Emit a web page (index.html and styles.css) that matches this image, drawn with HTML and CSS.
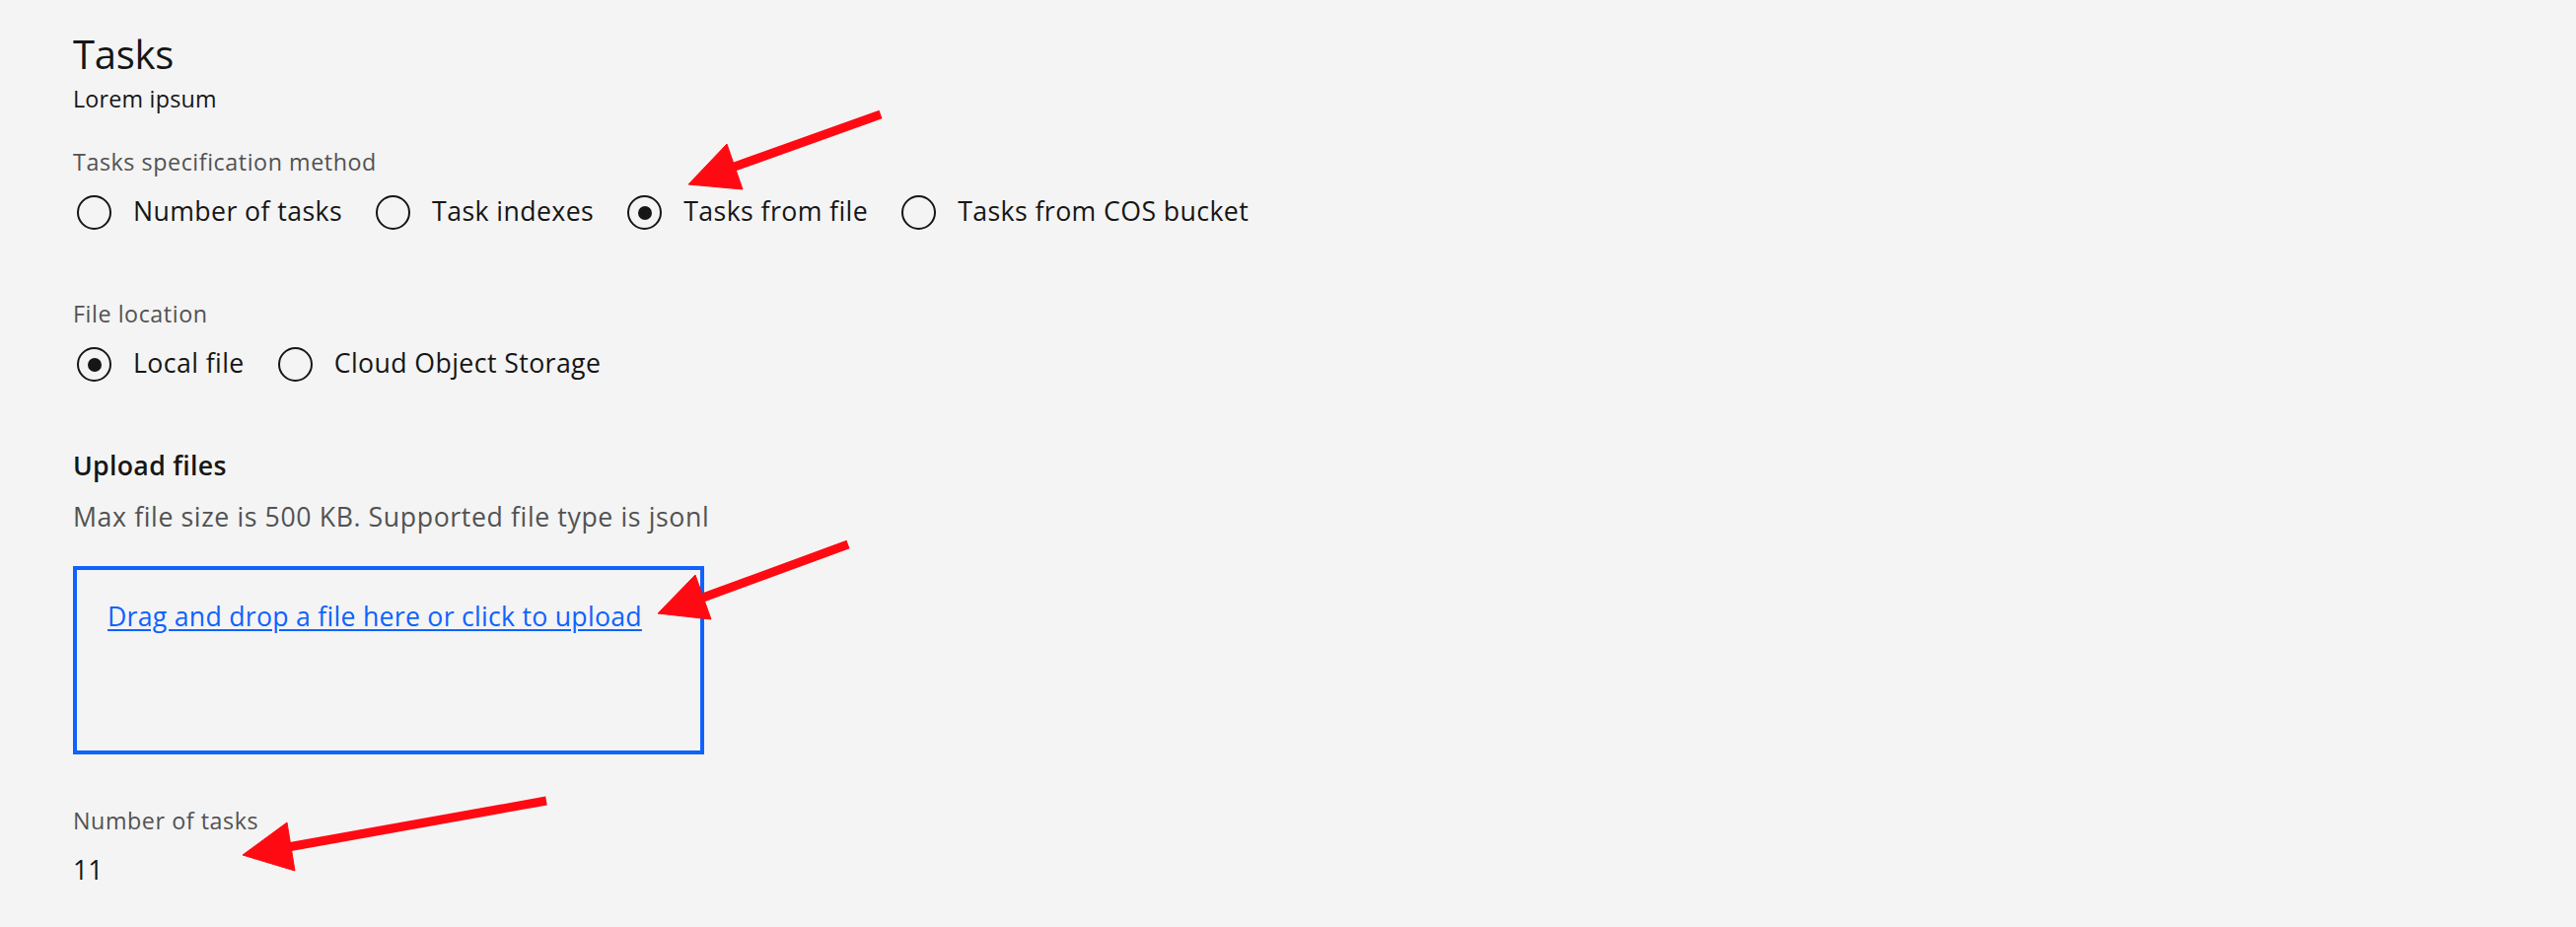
FILE: index.html
```html
<!DOCTYPE html>
<html lang="en">
<head>
<meta charset="utf-8">
<title>Tasks</title>
<link rel="stylesheet" href="styles.css">
</head>
<body>
<main class="page">
  <h1 class="title">Tasks</h1>
  <p class="subtitle">Lorem ipsum</p>

  <div class="field field--method">
    <div class="label">Tasks specification method</div>
    <div class="radio-group" role="radiogroup">
      <div class="radio"><span class="radio__circle"></span><span class="radio__text">Number of tasks</span></div>
      <div class="radio"><span class="radio__circle"></span><span class="radio__text">Task indexes</span></div>
      <div class="radio"><span class="radio__circle radio__circle--checked"></span><span class="radio__text">Tasks from file</span></div>
      <div class="radio"><span class="radio__circle"></span><span class="radio__text">Tasks from COS bucket</span></div>
    </div>
  </div>

  <div class="field field--location">
    <div class="label">File location</div>
    <div class="radio-group" role="radiogroup">
      <div class="radio"><span class="radio__circle radio__circle--checked"></span><span class="radio__text">Local file</span></div>
      <div class="radio"><span class="radio__circle"></span><span class="radio__text">Cloud Object Storage</span></div>
    </div>
  </div>

  <div class="upload">
    <h2 class="upload__title">Upload files</h2>
    <p class="upload__helper">Max file size is 500 KB. Supported file type is jsonl</p>
    <div class="dropzone">
      <a class="dropzone__link" href="#">Drag and drop a file here or click to upload</a>
    </div>
  </div>

  <div class="field field--count">
    <div class="label">Number of tasks</div>
    <div class="value">11</div>
  </div>
</main>

<svg class="annotations" width="2612" height="940" viewBox="0 0 2612 940" aria-hidden="true">
  <g fill="#ff0a12" stroke="#ff0a12">
    <line x1="893" y1="116" x2="742" y2="170" stroke-width="9"/>
    <polygon points="737,146 698,187 753,192" stroke-width="1"/>
    <line x1="860" y1="552" x2="710" y2="607" stroke-width="9"/>
    <polygon points="705,583 667,622 721,628" stroke-width="1"/>
    <line x1="554" y1="812" x2="292" y2="859" stroke-width="9"/>
    <polygon points="291,834 246,867 299,883" stroke-width="1"/>
  </g>
</svg>
</body>
</html>
```

FILE: styles.css
```css
* {
  box-sizing: border-box;
}

html, body {
  margin: 0;
  padding: 0;
  background: #f4f4f4;
}

body {
  font-family: "Open Sans", "Noto Sans", "Liberation Sans", sans-serif;
  color: #161616;
  position: relative;
  width: 2612px;
  height: 940px;
  overflow: hidden;
}

.page {
  padding: 31px 0 0 74px;
}

.title {
  margin: 0;
  font-size: 40px;
  line-height: 48px;
  font-weight: 400;
  letter-spacing: -0.3px;
}

.subtitle {
  margin: 5px 0 0;
  font-size: 23.3px;
  line-height: 32px;
  letter-spacing: 0.2px;
}

.label {
  font-size: 23.3px;
  line-height: 32px;
  color: #525252;
  letter-spacing: 0.55px;
}

.field--method {
  margin-top: 32px;
}

.field--location {
  margin-top: 69px;
}

.field--count {
  margin-top: 51px;
}

.radio-group {
  display: flex;
  gap: 30px;
  margin-top: 18px;
  height: 35px;
  align-items: center;
}

.radio {
  display: flex;
  align-items: center;
  gap: 22px;
}

.radio__circle {
  width: 35px;
  height: 35px;
  margin-left: 4px;
  border: 2px solid #161616;
  border-radius: 50%;
  display: flex;
  align-items: center;
  justify-content: center;
}

.radio__circle--checked::after {
  content: "";
  width: 14px;
  height: 14px;
  border-radius: 50%;
  background: #161616;
}

.radio__text {
  font-size: 26.7px;
  line-height: 34px;
  padding-bottom: 4px;
  letter-spacing: 0.4px;
}

.upload {
  margin-top: 68px;
}

.upload__title {
  margin: 0;
  font-size: 26.7px;
  line-height: 34px;
  font-weight: 600;
  letter-spacing: 0.3px;
}

.upload__helper {
  margin: 18px 0 0;
  font-size: 26.7px;
  line-height: 34px;
  color: #525252;
  letter-spacing: 0.6px;
}

.dropzone {
  margin-top: 33px;
  width: 640px;
  height: 191px;
  border: 4px solid #0f62fe;
  padding: 30px 0 0 31px;
}

.dropzone__link {
  font-size: 26.7px;
  line-height: 34px;
  color: #0f62fe;
  text-decoration: underline;
  text-underline-offset: 3px;
  letter-spacing: 0.25px;
}

.value {
  margin-top: 17px;
  font-size: 26.7px;
  line-height: 34px;
}

.annotations {
  position: absolute;
  top: 0;
  left: 0;
  pointer-events: none;
}
```
